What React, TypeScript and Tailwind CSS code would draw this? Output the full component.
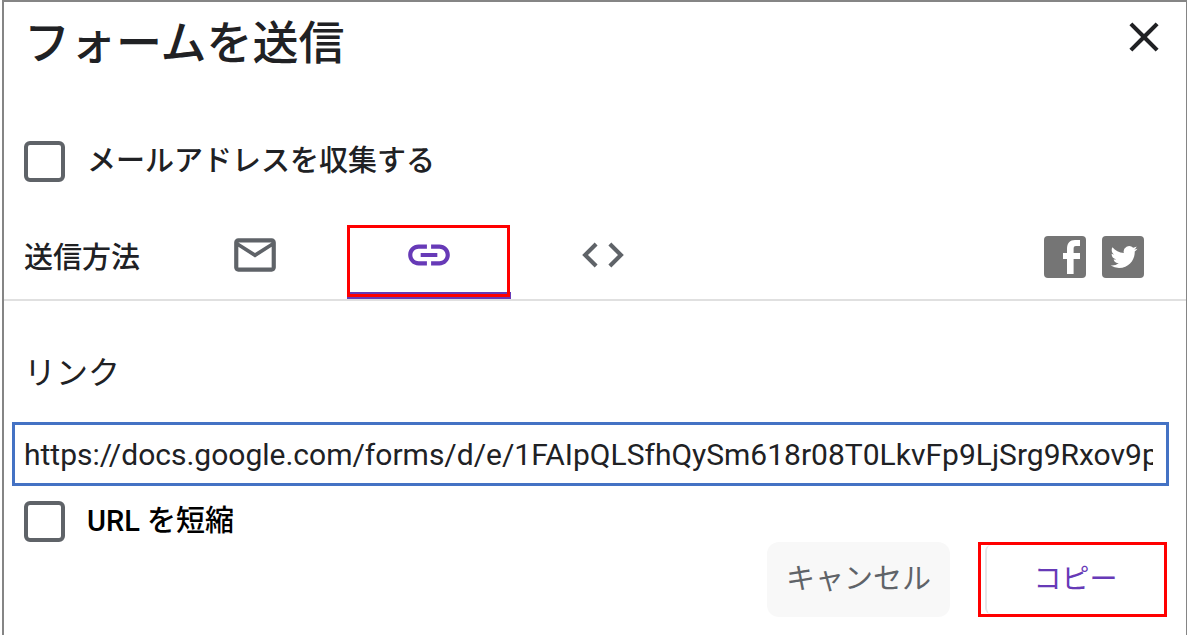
import React from 'react';

interface CheckRowProps {
  id: string;
  label: string;
  className?: string;
}

const CheckRow: React.FC<CheckRowProps> = ({ id, label, className = '' }) => (
  <div className={`flex items-center gap-[22px] ${className}`}>
    <input
      id={id}
      type="checkbox"
      className="h-[41px] w-[41px] shrink-0 appearance-none rounded-md border-4 border-[#5f6368] bg-white checked:bg-[#673ab7]"
    />
    <label htmlFor={id} className="text-[29px] leading-[42px]">
      {label}
    </label>
  </div>
);

const TABS = [
  {
    id: 'mail',
    label: 'メール',
    path: 'M22 6c0-1.1-.9-2-2-2H4c-1.1 0-2 .9-2 2v12c0 1.1.9 2 2 2h16c1.1 0 2-.9 2-2V6zm-2 0l-8 5-8-5h16zm0 12H4V8l8 5.2L20 8v10z',
  },
  {
    id: 'link',
    label: 'リンク',
    path: 'M17 7h-4v2h4c1.65 0 3 1.35 3 3s-1.35 3-3 3h-4v2h4c2.76 0 5-2.24 5-5s-2.24-5-5-5zm-6 8H7c-1.65 0-3-1.35-3-3s1.35-3 3-3h4V7H7c-2.76 0-5 2.24-5 5s2.24 5 5 5h4v-2zm-3-4h8v2H8z',
  },
  {
    id: 'embed',
    label: '埋め込み',
    path: 'M9.4 16.6L4.8 12l4.6-4.6L8 6l-6 6 6 6 1.4-1.4zm5.2 0l4.6-4.6-4.6-4.6L16 6l6 6-6 6-1.4-1.4z',
  },
];

const App: React.FC = () => {
  const [tab, setTab] = React.useState('link');

  return (
    <main
      lang="ja"
      className="ml-0.5 min-h-screen border-t-2 border-r border-l-2 border-[#858585] bg-white font-['Roboto','Noto_Sans_CJK_JP',sans-serif] text-[#202124]"
    >
      <header className="flex items-start justify-between pt-2.5 pr-[17px] pl-5">
        <h1 className="text-[46px] leading-[62px] font-medium">フォームを送信</h1>
        <button type="button" aria-label="閉じる" className="h-[50px] w-[50px]">
          <svg viewBox="0 0 24 24" fill="currentColor" className="h-full w-full">
            <path d="M19 6.41L17.59 5 12 10.59 6.41 5 5 6.41 10.59 12 5 17.59 6.41 19 12 13.41 17.59 19 19 17.59 13.41 12z" />
          </svg>
        </button>
      </header>

      <CheckRow id="collect" label="メールアドレスを収集する" className="mt-[66px] pl-5 font-medium" />

      <div className="mt-[43px] flex items-center border-b-2 border-[#e0e0e0] pr-[42px] pl-5">
        <span className="w-[149px] shrink-0 pb-2 text-[29px] leading-[42px] font-medium">送信方法</span>
        <div className="flex gap-2.5">
          {TABS.map((t) => (
            <button
              key={t.id}
              type="button"
              aria-label={t.label}
              aria-pressed={tab === t.id}
              onClick={() => setTab(t.id)}
              className={`relative flex h-[74px] w-[164px] justify-center border-b-[7px] pt-[5px] ${
                tab === t.id ? 'border-[#673ab7] text-[#673ab7]' : 'border-transparent text-[#5f6368]'
              }`}
            >
              <svg viewBox="0 0 24 24" fill="currentColor" className="h-[50px] w-[50px]">
                <path d={t.path} />
              </svg>
              {/* callout frame sits over the underline */}
              {tab === t.id && (
                <span className="absolute top-0 right-px -bottom-[5px] left-0 border-[3px] border-[#ff0000]" />
              )}
            </button>
          ))}
        </div>
        <div className="ml-auto flex gap-4 pb-2.5">
          <button type="button" aria-label="Facebook" className="h-[42px] w-[42px]">
            <svg viewBox="0 0 42 42" className="h-full w-full">
              <rect width="42" height="42" rx="4" fill="#757575" />
              <path
                fill="#fff"
                d="M23 38V23h-4v-6h4v-4c0-6 3-9 8-9h5v6h-4c-2 0-2.4 1-2.4 3v4H36v6h-6.4v15z"
              />
            </svg>
          </button>
          <button type="button" aria-label="Twitter" className="h-[42px] w-[42px]">
            <svg viewBox="0 0 42 42" className="h-full w-full">
              <rect width="42" height="42" rx="4" fill="#757575" />
              <path
                fill="#fff"
                transform="translate(8.6 7.6) scale(1.12)"
                d="M23.953 4.57a10 10 0 01-2.825.775 4.958 4.958 0 002.163-2.723c-.951.555-2.005.959-3.127 1.184a4.92 4.92 0 00-8.384 4.482C7.69 8.095 4.067 6.13 1.64 3.162a4.822 4.822 0 00-.666 2.475c0 1.71.87 3.213 2.188 4.096a4.904 4.904 0 01-2.228-.616v.06a4.923 4.923 0 003.946 4.827 4.996 4.996 0 01-2.212.085 4.936 4.936 0 004.604 3.417 9.867 9.867 0 01-6.102 2.105c-.39 0-.779-.023-1.17-.067a13.995 13.995 0 007.557 2.209c9.053 0 13.998-7.496 13.998-13.985 0-.21 0-.42-.015-.63A9.935 9.935 0 0024 4.59z"
              />
            </svg>
          </button>
        </div>
      </div>

      <div className="mt-12 pr-[17px] pl-2">
        <label htmlFor="url" className="block pl-3 text-[32px] leading-12">
          リンク
        </label>
        <input
          id="url"
          type="text"
          readOnly
          value="https://docs.google.com/forms/d/e/1FAIpQLSfhQySm618r08T0LkvFp9LjSrg9Rxov9pQ"
          className="mt-[25px] block h-16 w-full border-[3px] border-[#4472c4] pr-[13px] pl-[9px] text-[30px] outline-none"
        />
      </div>

      <CheckRow id="shorten" label="URL を短縮" className="mt-3.5 pl-5 font-medium text-black" />

      <div className="flex justify-end gap-7 pr-[19px]">
        <button
          type="button"
          className="h-[75px] w-[183px] rounded-xl bg-[#f8f8f8] text-[29px] text-[#5f6368]"
        >
          キャンセル
        </button>
        <button
          type="button"
          className="flex h-[75px] w-[189px] border-[3px] border-[#ff0000] pl-1 text-[28px] text-[#673ab7]"
        >
          <span className="flex h-full w-full items-center justify-center rounded-l-md border-l-2 border-[#e4e5e8]">
            コピー
          </span>
        </button>
      </div>
    </main>
  );
};

export default App;
